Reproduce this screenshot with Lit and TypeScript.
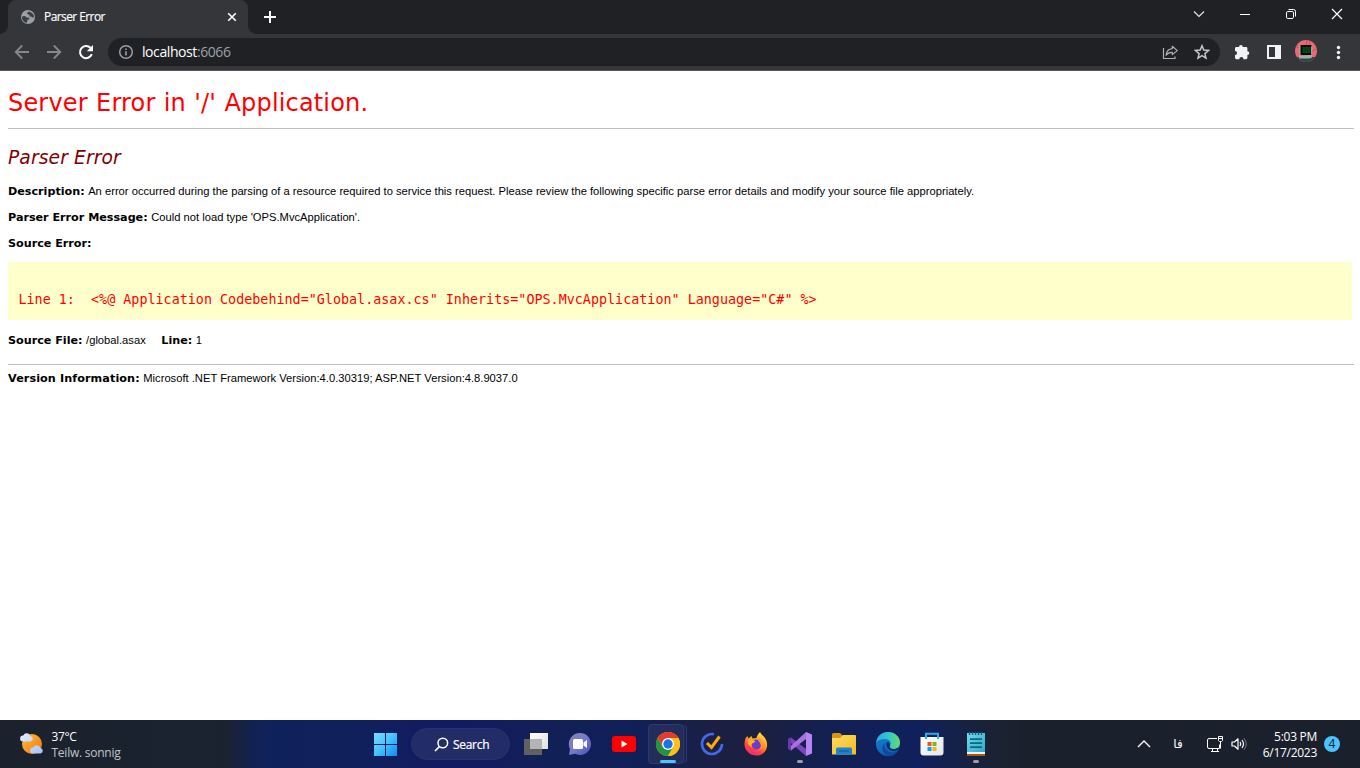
import { LitElement, html, svg, css, TemplateResult } from "lit";
import { customElement } from "lit/decorators.js";

const icon = (w: number, h: number, body: TemplateResult) =>
  html`<svg class="icon" width=${w} height=${h} viewBox="0 0 ${w} ${h}" fill="none">${body}</svg>`;

const iconStyles = css`
  .icon { display: block; flex: none; }
`;

@customElement("browser-chrome")
class BrowserChrome extends LitElement {
  static styles = [iconStyles, css`
    :host { display: block; height: 71px; font-family: "Open Sans", "Noto Sans", sans-serif; background: #202124; }
    .strip { display: flex; height: 34px; }
    .tab { display: flex; align-items: center; box-sizing: border-box; width: 240px; height: 34px; padding: 0 10px 0 12px; background: #35363a; border-radius: 8px 8px 0 0; }
    .title { flex: 1; margin-left: 8px; color: #fff; font-size: 12px; letter-spacing: -0.58px; line-height: 34px; white-space: nowrap; -webkit-text-stroke: 0.15px; }
    .foot { align-self: flex-end; width: 8px; height: 8px; background: radial-gradient(circle at 100% 0, #202124 7.5px, #35363a 8px); }
    .foot.left { background: radial-gradient(circle at 0 0, #202124 7.5px, #35363a 8px); }
    .plus { align-self: center; margin-left: 8px; }
    .window { display: flex; align-items: center; height: 28px; margin-left: auto; }
    .window > span { display: flex; justify-content: center; width: 46px; }
    .bar { display: flex; align-items: center; box-sizing: border-box; height: 37px; padding-left: 14px; background: #35363a; border-bottom: 1px solid #5c565d; }
    .nav { display: flex; gap: 16px; }
    .address { display: flex; align-items: center; box-sizing: border-box; width: 1112px; height: 28px; margin-left: 14px; padding: 0 10px 0 10px; border-radius: 14px; background: #202124; }
    .url { flex: 1; margin-left: 8px; color: #9aa0a6; font-size: 14px; letter-spacing: -0.42px; line-height: 28px; }
    .url b { color: #fff; font-weight: 400; }
    .actions { display: flex; gap: 16px; }
    .tools { display: flex; align-items: center; gap: 16px; margin-left: 14px; }
    .avatar { margin: -3px -3px 0 -3px; }
  `];

  render() {
    return html`
      <div class="strip">
        <span class="foot left"></span>
        <div class="tab">
          ${icon(16, 16, svg`<circle cx="8" cy="8" r="7" fill="#9aa0a6"/><path d="M2.400 7.200 5 7l1.600 1.500 2.600.2.200 1.500-2 .6-.4 3c-2.600 0-4.800-2.300-5-5Z" fill="#3c3d41"/><path d="M8.800 2.400 7 4l.4 1.300 1.800.3.600 1.900 2 .3 1.400 1 .8-.8c0-2.400-1.600-4.800-5.200-5.600Z" fill="#3c3d41"/>`)}
          <span class="title">Parser Error</span>
          ${icon(12, 12, svg`<path d="m2.200 2.200 7.600 7.600m0-7.600L2.200 9.800" stroke="#fff" stroke-width="1.600"/>`)}
        </div>
        <span class="foot"></span>
        <span class="plus">${icon(12, 12, svg`<path d="M6 0v12M0 6h12" stroke="#fff" stroke-width="2"/>`)}</span>
        <div class="window">
          <span>${icon(12, 12, svg`<path d="m1 3.500 5 5 5-5" stroke="#e8eaed" stroke-width="1.100"/>`)}</span>
          <span>${icon(10, 10, svg`<path d="M0 5.500h10" stroke="#fff"/>`)}</span>
          <span>${icon(12, 12, svg`<rect x="1.500" y="3.500" width="7" height="7" rx="1.300" stroke="#fff"/><path d="M3.500 1.500h5a2 2 0 0 1 2 2v5" stroke="#fff"/>`)}</span>
          <span>${icon(12, 12, svg`<path d="m1 1 10 10M11 1 1 11" stroke="#fff" stroke-width="1.200"/>`)}</span>
        </div>
      </div>
      <div class="bar">
        <div class="nav">
          ${icon(16, 16, svg`<path d="M15 8H2M8.200 1.500 1.700 8l6.500 6.500" stroke="#85878a" stroke-width="1.800"/>`)}
          ${icon(16, 16, svg`<path d="M1 8h13M7.800 1.500 14.300 8l-6.500 6.500" stroke="#85878a" stroke-width="1.800"/>`)}
          ${icon(16, 16, svg`<path d="M13.800 10.200A6.100 6.100 0 1 1 12.500 3.800" stroke="#fff" stroke-width="2"/><path d="M15 1v6.200H8.800Z" fill="#fff"/>`)}
        </div>
        <div class="address">
          ${icon(16, 16, svg`<circle cx="8" cy="8" r="6.300" stroke="#9aa0a6" stroke-width="1.500"/><path d="M8 7.200v4.300M8 4.400v1.700" stroke="#9aa0a6" stroke-width="1.600"/>`)}
          <span class="url"><b>localhost</b>:6066</span>
          <div class="actions">
            ${icon(16, 16, svg`<path d="M1.500 4v10.500H13V12.500" stroke="#aeb1b5" stroke-width="1.200"/><path d="M10.300 2.300 15.300 6.600 10.300 10.600V8.400C7.500 8.200 5.700 9 4.100 11.200 4.500 7.200 6.500 4.900 10.300 4.600Z" stroke="#aeb1b5" stroke-width="1.200" stroke-linejoin="round"/>`)}
            ${icon(16, 16, svg`<path d="m8 1.800 1.800 4.300 4.700.4-3.600 3.100 1.100 4.600L8 11.700l-4 2.500 1.100-4.600L1.500 6.500l4.700-.4Z" stroke="#c4c7ca" stroke-width="1.500"/>`)}
          </div>
        </div>
        <div class="tools">
          ${icon(16, 16, svg`<path d="M5 3a1.900 1.900 0 0 1 3.800 0H12a1.400 1.400 0 0 1 1.400 1.400v2.800a1.900 1.900 0 0 1 0 3.800v2.800a1.400 1.400 0 0 1-1.400 1.400H9.500a2.100 2.100 0 0 0-4.200 0H2.400A1.400 1.400 0 0 1 1 13.800v-2.700a2.100 2.100 0 0 0 0-4.200V4.400A1.400 1.400 0 0 1 2.400 3Z" fill="#f1f3f4"/>`)}
          ${icon(16, 16, svg`<path d="M1 1h14v14H1ZM3 3v10h6V3Z" fill="#f1f3f4" fill-rule="evenodd"/>`)}
          <span class="avatar">${icon(22, 22, svg`
            <clipPath id="face"><circle cx="11" cy="11" r="11"/></clipPath>
            <g clip-path="url(#face)"><path d="M0 0h22v22H0z" fill="#ee6674"/><path d="m12 0-1 5m4-4-1 4m8 4-5 2M0 6l5 2" stroke="#c94f5f"/><path d="M0 17h22v5H0z" fill="#30483f"/><path d="m4 6 2.500-1.500v10L4.500 16zM4 15.500h9l4-2v4l-2 1H4z" fill="#a1afa9"/><path d="M5.500 5h11v10h-11z" fill="#080c0b"/><path d="M7.500 7h8v6h-8z" fill="#034f1c"/><path d="M8 9h7M8 11h7M10 7v5.500M13 7v5.500" stroke="#02320f" stroke-width=".7"/><path d="m16 5.500 1.500 3-.3 6H16z" fill="#98a49f"/></g>`)}</span>
          ${icon(16, 16, svg`<circle cx="8.500" cy="3.500" r="1.700" fill="#f1f3f4"/><circle cx="8.500" cy="8.500" r="1.700" fill="#f1f3f4"/><circle cx="8.500" cy="13.500" r="1.700" fill="#f1f3f4"/>`)}
        </div>
      </div>`;
  }
}

@customElement("error-page")
class ErrorPage extends LitElement {
  static styles = css`
    :host { display: block; box-sizing: border-box; padding: 17px 6px 0 8px; background: #fff; color: #000; font: 11.2px/14px "DejaVu Sans", Verdana, sans-serif; white-space: nowrap; overflow: hidden; }
    h1 { margin: 0; color: #f00; font-size: 24px; font-weight: 400; line-height: 30px; letter-spacing: 0.17px; word-spacing: 0.55px; }
    hr { height: 1px; margin: 10px 0 0; border: 0; background: #c0c0c0; }
    h2 { margin: 17px 0 0; color: #800000; font-size: 18.67px; font-weight: 400; font-style: italic; line-height: 24px; letter-spacing: 0.12px; }
    .row { height: 14px; margin: 12px 0 0; }
    .row.first { margin-top: 14px; }
    .row span { font-family: "Liberation Sans", Arial, sans-serif; }
    .row b { letter-spacing: -0.02px; }
    .row b + span + b { margin-left: 12px; }
    .row.source { margin-top: 13px; }
    .code { box-sizing: border-box; height: 58px; margin: 11px 2px 0 0; padding: 30px 10.5px 0; background: #ffffcc; color: #f00; }
    pre { margin: 0; font: 13.4px/16px "DejaVu Sans Mono", Consolas, monospace; }
    .row.file { margin-top: 13px; }
    .end { margin-top: 17px; }
    .row.version { margin-top: 6px; }
    .row.version b { letter-spacing: 0.09px; }
  `;

  render() {
    return html`
      <h1>Server Error in '/' Application.</h1>
      <hr />
      <h2>Parser Error</h2>
      <p class="row first"><b>Description:</b> <span>An error occurred during the parsing of a resource required to service this request. Please review the following specific parse error details and modify your source file appropriately.</span></p>
      <p class="row"><b>Parser Error Message:</b> <span>Could not load type 'OPS.MvcApplication'.</span></p>
      <p class="row source"><b>Source Error:</b></p>
      <div class="code"><pre>${`Line 1:  <%@ Application Codebehind="Global.asax.cs" Inherits="OPS.MvcApplication" Language="C#" %>`}</pre></div>
      <p class="row file"><b>Source File:</b> <span>/global.asax</span> <b>Line:</b> <span>1</span></p>
      <hr class="end" />
      <p class="row version"><b>Version Information:</b> <span>Microsoft .NET Framework Version:4.0.30319; ASP.NET Version:4.8.9037.0</span></p>`;
  }
}

interface Pinned { art: TemplateResult; state?: "active" | "running"; }

const pinned: Pinned[] = [
  { art: svg`<defs><linearGradient id="tv" x2="1" y2="1"><stop stop-color="#fff"/><stop offset="1" stop-color="#dedede"/></linearGradient></defs><path d="M0 7h18v16H0z" fill="#616161"/><path d="M6 1h18v16H6z" fill="url(#tv)"/><path d="M6 7h12v10H6z" fill="#b4b4b4"/>` },
  { art: svg`<defs><linearGradient id="ch" x2="1" y2="1"><stop stop-color="#8a87a8"/><stop offset=".5" stop-color="#7479cf"/><stop offset="1" stop-color="#4950b6"/></linearGradient></defs><path d="M12 1a11 11 0 1 1-5 20.800L1 23l1-6A11 11 0 0 1 12 1Z" fill="url(#ch)"/><rect x="5" y="7" width="10" height="10" rx="1.500" fill="#fff"/><path d="m15.500 10.500 3.500-2.500v8l-3.500-2.500z" fill="#fff"/>` },
  { art: svg`<rect x="0" y="4" width="24" height="16" rx="3" fill="#f00"/><path d="m9.500 8.500 6 3.500-6 3.500z" fill="#fff"/>` },
  { state: "active", art: svg`<circle cx="12" cy="12" r="12" fill="#fbc117"/><path d="M1.600 6A12 12 0 0 1 22.400 6H12L7 15Z" fill="#e33b2e"/><path d="M1.600 6A12 12 0 0 0 12 24l5.200-9H6.800Z" fill="#229342"/><path d="M12 24 17.200 15 17.200 9 12 6H22.400A12 12 0 0 1 12 24Z" fill="#fbc117"/><circle cx="12" cy="12" r="6" fill="#fff"/><circle cx="12" cy="12" r="4.700" fill="#1a73e8"/>` },
  { art: svg`<path d="M14 2.200A10 10 0 1 0 22 12" stroke="#4269ed" stroke-width="2.600"/><path d="m7 11 4.500 4.500L19.500 4.500" stroke="#ffa90a" stroke-width="3"/>` },
  { art: svg`<defs><linearGradient id="ff" x1=".8" y1="0" x2=".3" y2="1"><stop stop-color="#ffe64a"/><stop offset=".45" stop-color="#ff9b24"/><stop offset=".75" stop-color="#ff4048"/><stop offset="1" stop-color="#e62781"/></linearGradient></defs><path d="M16 0c1 3 5 4 6.500 9C25 17 20 23.500 12.500 23.500S-1 17 .8 9.500C1 7 2 5 3.500 4l.7 2.500L7.500 4l1 2.500 4-.5C13 4 14 2 16 0Z" fill="url(#ff)"/><circle cx="12.500" cy="12.500" r="5" fill="#6b3dcc"/><path d="M4 7.500 8 7l3.500 2.500-2.200 1.500C7 11.500 7 14 9 15.500c-4-.5-5.500-4-5-8Z" fill="#ffb02d"/><path d="M12 6c4-1 7 2 7 6 0 3-2 5-4 6 4-4 1-8-3-12Z" fill="#ff9a28"/>` },
  { state: "running", art: svg`<path d="m0 7 3-1.500 15 11.500V24L3 11v7l-3-2z" fill="#7d45bd"/><path d="M0 16.500 18 0v7L3 18.500z" fill="#a96ee0"/><path d="m18 0 6 2.500v19L18 24z" fill="#b485f0"/><path d="M0 7l3-1.500v13L0 17z" fill="#6f38a8"/>` },
  { art: svg`<defs><linearGradient id="fd" x2="1" y2="1"><stop stop-color="#ffdc62"/><stop offset="1" stop-color="#f7b91f"/></linearGradient></defs><path d="M0 2.500Q0 1 1.500 1H8l3 3v4H0z" fill="#d99510"/><path d="M0 6h8l3-3h12q1 0 1 1v18.500H0z" fill="url(#fd)"/><path d="M4 22.500V17q0-1.500 1.500-1.500h13Q20 15.500 20 17v5.500z" fill="#1f84cf"/><path d="M7 19h10" stroke="#0a5c9f" stroke-width="1.200"/>` },
  { art: svg`<defs><linearGradient id="ed" x2="1"><stop stop-color="#2aa8e2"/><stop offset=".5" stop-color="#31c6cf"/><stop offset="1" stop-color="#68dc61"/></linearGradient><linearGradient id="eb" y2="1" x2=".4"><stop stop-color="#1683ce"/><stop offset="1" stop-color="#0b62bb"/></linearGradient></defs><circle cx="12" cy="12" r="12" fill="url(#eb)"/><path d="M.2 10.500C1 4 6 0 12 0c7 0 12 5 12 10.500 0 4-3 6.500-6.500 6.500-3 0-4-1.500-3.500-3 2-4-1-7-5-7S1.500 8.500.2 10.500Z" fill="url(#ed)"/><path d="M9 11c-2 5 3 10 8 9.500 2 0 4-1 5-2C17 27 7 24.500 6.500 17c0-3 1-5 2.500-6Z" fill="#0d4a9c"/><path d="M11 10c-2 5 2 9 7 9 2 0 3.500-.7 4.500-1.500l1-2.500c-2 1.500-4 2-6 2-3 0-4.500-1.500-3.500-4 0-1.500-1-3-3-3Z" fill="#122a64"/>` },
  { art: svg`<defs><linearGradient id="st" y2="1"><stop stop-color="#fff"/><stop offset="1" stop-color="#e3e5ea"/></linearGradient></defs><path d="M.5 5h23v15.500a3 3 0 0 1-3 3h-17a3 3 0 0 1-3-3z" fill="url(#st)"/><path d="M6 7V1.700h12V7" stroke="#29aef2" stroke-width="2"/><path d="M7.500 10h4v4h-4z" fill="#f1511b"/><path d="M12.500 10h4v4h-4z" fill="#78ba18"/><path d="M7.500 15h4v4h-4z" fill="#05a3ee"/><path d="M12.500 15h4v4h-4z" fill="#fbb90e"/>` },
  { state: "running", art: svg`<defs><linearGradient id="np" y2="1"><stop stop-color="#71dcec"/><stop offset="1" stop-color="#2fa6c6"/></linearGradient></defs><path d="M3 1h18v20H3z" fill="url(#np)"/><path d="M5.500 0v3M8.500 0v3M11.500 0v3M14.500 0v3M17.500 0v3" stroke="#12657f" stroke-width="1.400"/><path d="M6 7.200h12M6 11.200h12M6 15.200h12" stroke="#0b6784" stroke-width="1.800"/><path d="M3 20h18v2H3z" fill="#f0f3f5"/><path d="M3 22h18v2H3z" fill="#a65720"/>` },
];

@customElement("task-bar")
class TaskBar extends LitElement {
  static styles = [iconStyles, css`
    :host { display: flex; align-items: center; height: 48px; font: 12px/16px "Open Sans", "Noto Sans", sans-serif; color: #fff; white-space: nowrap;
      background: linear-gradient(90deg, #1b222d 0, #1a2230 225px, #10225a 262px, #10205c 360px, #121a62 460px, #122058 540px, #111f58 640px, #1b2044 710px, #1b2040 765px, #112056 835px, #10205c 920px, #1a2238 985px, #1b212c 1020px); }
    .weather { display: flex; align-items: center; width: 344px; padding-left: 19px; }
    .weather p { margin: 2px 0 0 7.5px; letter-spacing: -0.35px; }
    .weather small { display: block; font-size: 12px; color: #c1c4c9; letter-spacing: -0.25px; }
    .start { display: flex; justify-content: center; width: 45px; }
    .search { display: flex; align-items: center; box-sizing: border-box; width: 99px; height: 32px; margin: 0 4px 0 3px; padding-left: 21.5px; gap: 4.5px; border: 1px solid #293369; border-radius: 16px; background: #222c67; }
    .search span { letter-spacing: -0.3px; -webkit-text-stroke: 0.2px; margin-top: 1px; }
    .apps { display: flex; }
    .app { display: grid; place-items: center; position: relative; width: 44px; height: 48px; }
    .app.active::before { content: ""; position: absolute; inset: 4px 2px; box-sizing: border-box; width: 36px; border: 1px solid #2f3a6c; border-radius: 4px; background: #222d5c; box-shadow: 3px 0 0 -1px #1b2752, 4px 0 0 -1px #2f3a6c; }
    .app .icon { position: relative; }
    .app.active::after, .app.running::after { content: ""; position: absolute; bottom: 5px; left: 19px; width: 6px; height: 3px; border-radius: 2px; background: #9a9eaa; }
    .app.active::after { left: 14px; width: 16px; background: #4cc2ff; }
    .tray { display: flex; align-items: center; margin-left: auto; }
    .lang { width: 12px; margin: 0 23px 0 21px; text-align: center; font: 12px/16px "DejaVu Sans", sans-serif; }
    .net { margin-right: 7px; }
    .clock { width: 70px; margin: 1px 7px 0 0; text-align: right; letter-spacing: -0.28px; }
    .badge { width: 16px; height: 16px; margin-right: 20px; border-radius: 50%; background: #4cc2ff; color: #10202c; font-size: 12px; text-align: center; }
  `];

  render() {
    return html`
      <div class="weather">
        ${icon(25, 24, svg`<defs><linearGradient id="sun" x2="1" y2="1"><stop stop-color="#ffc040"/><stop offset="1" stop-color="#f27408"/></linearGradient><linearGradient id="cloud" y2="1"><stop stop-color="#e2efff"/><stop offset="1" stop-color="#a7c2f4"/></linearGradient></defs><circle cx="13" cy="12" r="10" fill="url(#sun)"/><path d="M4 9.500a3 3 0 0 1 .2-6A4 4 0 0 1 11.500 4a2.800 2.800 0 0 1 0 5.500ZM14 21.500a3 3 0 0 1 .2-6 4 4 0 0 1 7.300.500 2.800 2.800 0 0 1 0 5.500Z" fill="url(#cloud)"/>`)}
        <p>37°C<small>Teilw. sonnig</small></p>
      </div>
      <div class="start">${icon(24, 24, svg`<defs><linearGradient id="win" gradientUnits="userSpaceOnUse" x1="0" y1="0" x2="24" y2="24"><stop stop-color="#80dcff"/><stop offset=".5" stop-color="#43c2fb"/><stop offset="1" stop-color="#0a8bf0"/></linearGradient></defs><path d="M0 1h11v11H0zM12 1h11v11H12zM0 13h11v11H0zM12 13h11v11H12z" fill="url(#win)"/>`)}</div>
      <div class="search">
        ${icon(15, 15, svg`<circle cx="8.800" cy="6" r="4.800" stroke="#fff" stroke-width="1.500"/><path d="M5.400 9.600 1 14" stroke="#fff" stroke-width="1.700"/>`)}
        <span>Search</span>
      </div>
      <div class="apps">${pinned.map((p) => html`<div class="app ${p.state ?? ""}">${icon(24, 24, p.art)}</div>`)}</div>
      <div class="tray">
        ${icon(14, 10, svg`<path d="m1 8 6-6 6 6" stroke="#fff" stroke-width="1.300"/>`)}
        <span class="lang">فا</span>
        <span class="net">${icon(17, 16, svg`<path d="M10 2.500H2A1.500 1.500 0 0 0 .5 4v7A1.500 1.500 0 0 0 2 12.500h10.500v-4M4 15.500h8M5.500 12.500v3M10.500 12.500v3" stroke="#fff"/><path d="M11.500.5h4v4l-1 1h-2l-1-1zM13.500 5.500v7" stroke="#fff"/><path d="M12 2.500h3" stroke="#fff"/>`)}</span>
        ${icon(16, 14, svg`<path d="M1 5h2.500L7 1.800v10.400L3.500 9H1Z" stroke="#fff" stroke-width="1.200" stroke-linejoin="round"/><path d="M9 4.800q1.500 2.200 0 4.400M11 3q3 4 0 8" stroke="#fff" stroke-width="1.200"/><path d="M13 1.200q4.500 5.800 0 11.600" stroke="#737985"/>`)}
        <div class="clock">5:03 PM<br />6/17/2023</div>
        <div class="badge">4</div>
      </div>`;
  }
}

@customElement("app-root")
class AppRoot extends LitElement {
  static styles = css`
    :host { display: grid; grid-template-rows: 71px 1fr 48px; width: 100vw; height: 100vh; overflow: hidden; }
  `;

  render() {
    return html`<browser-chrome></browser-chrome><error-page></error-page><task-bar></task-bar>`;
  }
}
